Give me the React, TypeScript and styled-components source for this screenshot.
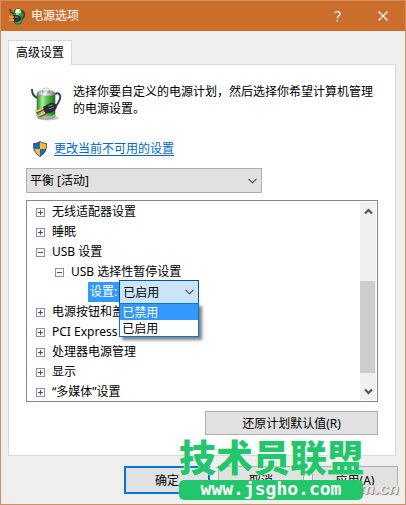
import React from 'react';
import styled, { createGlobalStyle, css } from 'styled-components';

const uiFont = '"Noto Sans", "Noto Sans CJK SC", sans-serif';

const GlobalStyle = createGlobalStyle`
  * { box-sizing: border-box; }
  body { margin: 0; background: #efefef; }
  button, select { font-family: inherit; font-size: inherit; color: inherit; margin: 0; border-radius: 0; }
  ul { list-style: none; margin: 0; padding: 0; }
`;

const Dialog = styled.main`
  position: relative;
  display: flex;
  flex-direction: column;
  min-height: 100vh;
  border: 1px solid #d4905c;
  background: #efefef;
  color: #000;
  font: 12px/16px ${uiFont};
`;

const TitleBar = styled.header`
  display: flex;
  align-items: center;
  height: 30px;
  padding-left: 8px;
  background: #cc6e2b;
  color: #fff;
`;

const Title = styled.h1`
  flex: 1;
  margin: 0 0 0 5px;
  font-size: 12px;
  font-weight: 400;
`;

const CaptionButton = styled.button`
  display: grid;
  place-items: center;
  width: 45px;
  height: 30px;
  padding: 0;
  border: 0;
  background: none;
`;

const Body = styled.div`
  flex: 1;
  display: flex;
  flex-direction: column;
  padding: 9px 7px 10px;
`;

const Tab = styled.button`
  position: relative;
  z-index: 1;
  align-self: flex-start;
  height: 25px;
  margin-bottom: -1px;
  padding: 0 7px 2px;
  border: 1px solid #d9d9d9;
  border-bottom: 0;
  background: #fff;
`;

const Panel = styled.section`
  flex: 1;
  display: flex;
  flex-direction: column;
  margin-right: 2px;
  padding: 18px 17px 20px;
  border: 1px solid #d9d9d9;
  background: #fff;
`;

const Intro = styled.div`
  display: flex;
  align-items: flex-start;
  gap: 10px;
  padding-left: 5px;
  & > svg { flex: none; margin-top: 4px; }
`;

const IntroText = styled.p`
  margin: 0;
  line-height: 17px;
`;

const LinkRow = styled.div`
  display: flex;
  align-items: center;
  gap: 7px;
  margin-top: 20px;
  padding-left: 7px;
`;

const Link = styled.a`
  color: #0066cc;
  text-decoration: underline;
  text-underline-offset: 2px;
`;

const SelectBox = styled.div<{ $active?: boolean }>`
  position: relative;
  display: flex;
  align-items: center;
  ${p => p.$active
    ? css`width: 80px; height: 24px; border: 1px solid #005499; background: #cce4f7;`
    : css`width: 67%; height: 25px; margin-top: 11px; border: 1px solid #adadad; background: #e1e1e1;`}
  & > svg { position: absolute; right: 4px; pointer-events: none; }
`;

const Select = styled.select`
  appearance: none;
  width: 100%;
  height: 100%;
  padding: 0 20px 0 3px;
  border: 0;
  outline: 0;
  background: transparent;
`;

const TreeFrame = styled.div`
  display: flex;
  height: 202px;
  margin-top: 7px;
  padding: 1px;
  border: 1px solid #828790;
`;

const Tree = styled.ul`
  flex: 1;
`;

const TreeRow = styled.li<{ $level?: number }>`
  display: flex;
  align-items: center;
  gap: 7px;
  height: 20px;
  padding-left: ${p => 8 + (p.$level ?? 0) * 19}px;
  white-space: nowrap;
`;

const Expander = styled.button`
  display: grid;
  place-items: center;
  width: 9px;
  height: 9px;
  padding: 0;
  border: 1px solid #919191;
  background: #fbfbfb;
`;

const SettingRow = styled.li`
  position: relative;
  display: flex;
  align-items: center;
  height: 20px;
  padding-left: 60px;
`;

const SettingLabel = styled.label`
  height: 20px;
  padding: 0 2px;
  line-height: 20px;
  background: #3399ff;
  color: #fff;
`;

const Options = styled.ul`
  position: absolute;
  z-index: 2;
  top: 100%;
  left: -1px;
  width: 80px;
  border: 1px solid #0078d7;
  background: #fff;
  box-shadow: 3px 3px 3px rgba(0, 0, 0, 0.5);
`;

const Option = styled.li<{ $selected?: boolean }>`
  height: 16px;
  padding-left: 2px;
  line-height: 18px;
  background: ${p => (p.$selected ? '#3399ff' : '#fff')};
  color: ${p => (p.$selected ? '#fff' : '#000')};
`;

const ScrollBar = styled.div`
  display: flex;
  flex-direction: column;
  width: 16px;
  background: #f0f0f0;
`;

const ScrollButton = styled.button`
  display: grid;
  place-items: center;
  height: 18px;
  padding: 0;
  border: 0;
  background: none;
`;

const ScrollTrack = styled.div`
  flex: 1;
  display: flex;
  flex-direction: column;
  justify-content: flex-end;
  padding: 0 1px 9px 0;
`;

const Thumb = styled.div`
  height: 60%;
  background: #cdcdcd;
`;

const PushButton = styled.button<{ $primary?: boolean; $wide?: boolean }>`
  width: ${p => (p.$wide ? '173px' : '86px')};
  height: ${p => (p.$wide ? '24px' : '28px')};
  padding: 0;
  border: ${p => (p.$primary ? '2px solid #0078d7' : '1px solid #adadad')};
  background: #e1e1e1;
`;

const ResetRow = styled.div`
  display: flex;
  justify-content: flex-end;
  margin-top: 9px;
`;

const Actions = styled.footer`
  display: flex;
  justify-content: flex-end;
  gap: 8px;
  margin-top: 10px;
`;

const Watermark = styled.div`
  position: absolute;
  z-index: 3;
  right: 42px;
  bottom: 4px;
  width: 184px;
  pointer-events: none;
`;

const WatermarkName = styled.div`
  font: 900 37px/40px "Noto Sans CJK SC", sans-serif;
  color: #22c66b;
  text-shadow: 0 0 1px #fff, 0 0 1px #fff;
  white-space: nowrap;
`;

const WatermarkSite = styled.div`
  height: 20px;
  margin-top: 4px;
  border-radius: 5px;
  background: #22c66b;
  color: #fff;
  font: bold 18px/17px "DejaVu Sans Mono", monospace;
  text-align: center;
`;

const SourceMark = styled.div`
  position: absolute;
  z-index: 2;
  right: 6px;
  bottom: 5px;
  color: #e8e8e8;
  font: italic bold 17px/20px "Liberation Sans", sans-serif;
  text-shadow: 1px 1px 1px #888;
  pointer-events: none;
`;

const Chevron = () => (
  <svg width="9" height="6" viewBox="0 0 9 6" fill="none" stroke="#444" strokeWidth="1.1">
    <path d="M.5.8 4.5 4.8 8.5.8" />
  </svg>
);

const ScrollArrow = ({ up = false }: { up?: boolean }) => (
  <svg width="9" height="7" viewBox="0 0 9 7" fill="none" stroke="#555" strokeWidth="2.2">
    <path d={up ? 'M1 5.5 4.5 2 8 5.5' : 'M1 1.5 4.5 5 8 1.5'} />
  </svg>
);

const BatteryIcon = () => (
  <svg width="32" height="34" viewBox="0 0 32 34">
    <defs>
      <linearGradient id="cell" x1="0" x2="1">
        <stop offset="0" stopColor="#258c25" />
        <stop offset=".3" stopColor="#a8ef91" />
        <stop offset=".6" stopColor="#49bd43" />
        <stop offset="1" stopColor="#1d701e" />
      </linearGradient>
      <linearGradient id="cap" x1="0" x2="1">
        <stop offset="0" stopColor="#888" />
        <stop offset=".4" stopColor="#fff" />
        <stop offset="1" stopColor="#777" />
      </linearGradient>
    </defs>
    <ellipse cx="17" cy="31" rx="11" ry="2.5" fill="#999" opacity=".5" />
    <path d="M1 2c0 5 2 8 6 9M24 7c4-2 6 1 5 5-1 3-2 5-5 8" fill="none" stroke="#3e4354" strokeWidth="2" />
    <path d="M6 6v23c0 4 18 4 18 0V6z" fill="url(#cell)" stroke="#327035" strokeWidth=".6" />
    <path d="M6 27v2c0 4 18 4 18 0v-2c-3 3-15 3-18 0z" fill="#a9b3a9" />
    <ellipse cx="15" cy="6" rx="9" ry="3" fill="url(#cap)" stroke="#9ba99b" strokeWidth=".6" />
    <path d="M11 2.500v3c0 1.500 8 1.500 8 0v-3z" fill="url(#cap)" />
    <ellipse cx="15" cy="2.500" rx="4" ry="1.500" fill="#f8f8f8" stroke="#999" strokeWidth=".5" />
    <path d="m12 20 7-4c3-1 7 1 7 4-1 3-4 5-7 6l-5 1z" fill="#292b34" />
    <path d="m17 19 5-1M18 22l5-2" stroke="#80828b" strokeWidth="1" />
    <path d="m13 22-8 3M15 26l-7 3" stroke="#7b4d18" strokeWidth="3.2" />
    <path d="m12 21.500-7 3M14 25.500l-6 3" stroke="#f5d995" strokeWidth="1.500" />
  </svg>
);

const TitleIcon = () => (
  <svg width="17" height="17" viewBox="0 0 17 17">
    <path d="M1 1c0 3 1 4 4 5M13 3c3 1 3 6 0 8" fill="none" stroke="#37363b" strokeWidth="1.5" />
    <rect x="5" y="1" width="8" height="15" rx="3" fill="#27ad43" stroke="#176f2e" />
    <path d="M7 1h4l1 4H6z" fill="#e5f7e4" />
    <path d="M7 5h3v9H7z" fill="#83e790" />
    <path d="M4 7h5l3 2v3l-3 2H6l-2-3z" fill="#303139" />
    <path d="M6 9h3" stroke="#888" />
    <path d="M0 9h5M0 12h5" stroke="#f4ad2d" strokeWidth="1.6" />
  </svg>
);

const Shield = () => (
  <svg width="14" height="16" viewBox="0 0 14 16">
    <path d="M7 .5c2 1.300 4 2 6.500 2 .2 6-1.500 10-6.500 13C2 12.500.3 8.500.5 2.500 3 2.500 5 1.800 7 .5z" fill="#fbbd23" />
    <path d="M7 .5v7.500H.7C.5 6.500.5 4.500.5 2.500 3 2.500 5 1.800 7 .5zM7 8h6.300C12.500 11.500 10.500 13.500 7 15.500z" fill="#176bc3" />
    <path d="M7 .5c2 1.300 4 2 6.500 2 .2 6-1.500 10-6.500 13-5-3-6.700-7-6.500-13C3 2.500 5 1.800 7 .5z" fill="none" stroke="#3f5367" />
  </svg>
);

const Node = ({ label, level = 0, open = false }: { label: string; level?: number; open?: boolean }) => (
  <TreeRow $level={level} role="treeitem" aria-expanded={open}>
    <Expander aria-label={label}>
      <svg width="7" height="7" viewBox="0 0 7 7" stroke="#36579b">
        <path d={open ? 'M1 3.5h5' : 'M1 3.5h5M3.5 1v5'} />
      </svg>
    </Expander>
    <span>{label}</span>
  </TreeRow>
);

export default function App() {
  return (
    <Dialog>
      <GlobalStyle />
      <TitleBar>
        <TitleIcon />
        <Title>电源选项</Title>
        <CaptionButton aria-label="帮助">
          <svg width="7" height="11" viewBox="0 0 7 11" fill="none" stroke="#fff" strokeWidth="1.3">
            <path d="M1 2.200C1 1 2 .7 3.300.7 5 .7 6 1.500 6 2.900c0 2-2.700 2-2.700 4.600M3.300 9v1.500" />
          </svg>
        </CaptionButton>
        <CaptionButton aria-label="关闭">
          <svg width="10" height="10" viewBox="0 0 10 10" stroke="#fff" strokeWidth="1.2">
            <path d="m.5.5 9 9m0-9-9 9" />
          </svg>
        </CaptionButton>
      </TitleBar>
      <Body>
        <Tab role="tab" aria-selected="true">高级设置</Tab>
        <Panel role="tabpanel">
          <Intro>
            <BatteryIcon />
            <IntroText>选择你要自定义的电源计划，然后选择你希望计算机管理的电源设置。</IntroText>
          </Intro>
          <LinkRow>
            <Shield />
            <Link href="#settings">更改当前不可用的设置</Link>
          </LinkRow>
          <SelectBox>
            <Select aria-label="电源计划" defaultValue="balanced">
              <option value="balanced">平衡 [活动]</option>
            </Select>
            <Chevron />
          </SelectBox>
          <TreeFrame>
            <Tree role="tree">
              <Node label="无线适配器设置" />
              <Node label="睡眠" />
              <Node label="USB 设置" open />
              <Node label="USB 选择性暂停设置" level={1} open />
              <SettingRow>
                <SettingLabel htmlFor="suspend">设置:</SettingLabel>
                <SelectBox $active>
                  <Select id="suspend" defaultValue="on">
                    <option value="off">已禁用</option>
                    <option value="on">已启用</option>
                  </Select>
                  <Chevron />
                  <Options role="listbox" aria-label="设置">
                    <Option role="option" aria-selected="true" $selected>已禁用</Option>
                    <Option role="option" aria-selected="false">已启用</Option>
                  </Options>
                </SelectBox>
              </SettingRow>
              <Node label="电源按钮和盖子" />
              <Node label="PCI Express" />
              <Node label="处理器电源管理" />
              <Node label="显示" />
              <Node label="“多媒体”设置" />
            </Tree>
            <ScrollBar>
              <ScrollButton aria-label="向上滚动"><ScrollArrow up /></ScrollButton>
              <ScrollTrack><Thumb /></ScrollTrack>
              <ScrollButton aria-label="向下滚动"><ScrollArrow /></ScrollButton>
            </ScrollBar>
          </TreeFrame>
          <ResetRow>
            <PushButton $wide>还原计划默认值(R)</PushButton>
          </ResetRow>
        </Panel>
        <Actions>
          <PushButton $primary>确定</PushButton>
          <PushButton>取消</PushButton>
          <PushButton>应用(A)</PushButton>
        </Actions>
      </Body>
      <SourceMark>pconline.com.cn</SourceMark>
      <Watermark>
        <WatermarkName>技术员联盟</WatermarkName>
        <WatermarkSite>www.jsgho.com</WatermarkSite>
      </Watermark>
    </Dialog>
  );
}
